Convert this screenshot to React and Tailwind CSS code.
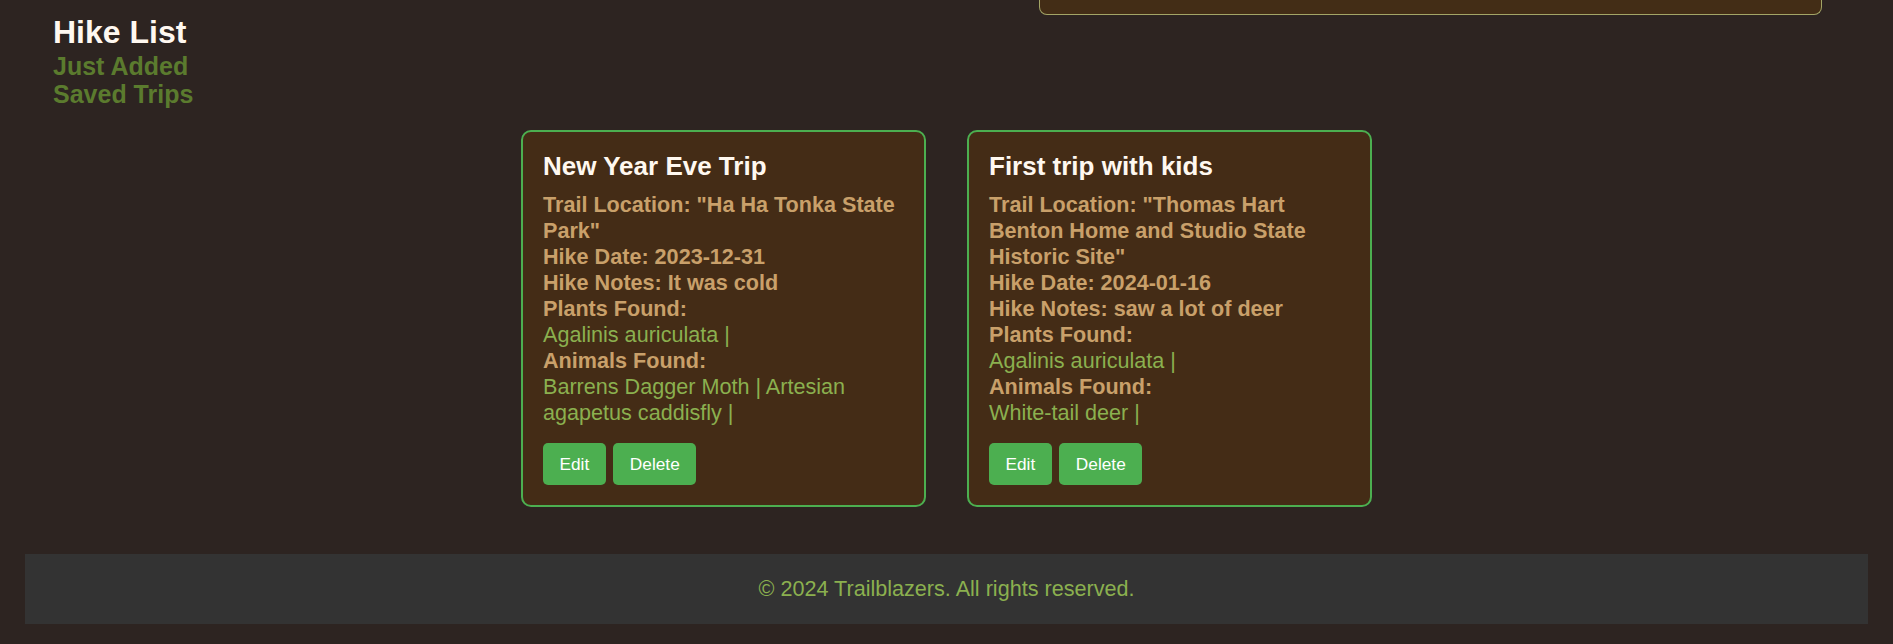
import React from 'react';

const hikes = [
  {
    id: 1,
    name: 'New Year Eve Trip',
    location: '"Ha Ha Tonka State Park"',
    date: '2023-12-31',
    notes: 'It was cold',
    plants: ['Agalinis auriculata'],
    animals: ['Barrens Dagger Moth', 'Artesian agapetus caddisfly'],
  },
  {
    id: 2,
    name: 'First trip with kids',
    location: '"Thomas Hart Benton Home and Studio State Historic Site"',
    date: '2024-01-16',
    notes: 'saw a lot of deer',
    plants: ['Agalinis auriculata'],
    animals: ['White-tail deer'],
  },
];

const HikeCard = ({ hike }) => (
  <div className="w-[405px] bg-[#442c16] border-2 border-[#4caf50] rounded-[10px] p-[20px]">
    <h3 className="text-[26px] font-bold leading-[30px] text-[#fff8f0] -mt-[1px] mb-[11px]">{hike.name}</h3>
    <div className="text-[21.6px] leading-[26px]">
      <p className="font-bold text-[#c9a06a]">Trail Location: {hike.location}</p>
      <p className="font-bold text-[#c9a06a]">Hike Date: {hike.date}</p>
      <p className="font-bold text-[#c9a06a]">Hike Notes: {hike.notes}</p>
      <p className="font-bold text-[#c9a06a]">Plants Found:</p>
      <p className="text-[#8bb04f]">
        {hike.plants.map((p) => `${p} | `).join('')}
      </p>
      <p className="font-bold text-[#c9a06a]">Animals Found:</p>
      <p className="text-[#8bb04f]">
        {hike.animals.map((a) => `${a} | `).join('')}
      </p>
    </div>
    <div className="flex gap-[7.6px] mt-[17px]">
      <button className="bg-[#4caf50] text-white text-[17.28px] leading-[20px] px-[16.5px] py-[11px] rounded-[5px]">
        Edit
      </button>
      <button className="bg-[#4caf50] text-white text-[17.28px] leading-[20px] px-[16.5px] py-[11px] rounded-[5px]">
        Delete
      </button>
    </div>
  </div>
);

const App = () => {
  return (
    <div className="min-h-screen bg-[#2d2421] [font-family:'Liberation_Sans',Arial,sans-serif] flex flex-col">
      {/* Header: nav on the left, add-hike form (scrolled off) on the right */}
      <div className="flex justify-between items-start">
        <nav className="pl-[53px] pt-[12px]">
          <h2 className="text-[32px] font-bold leading-[40px] text-[#fff8f0]">Hike List</h2>
          <a className="block text-[25px] font-bold leading-[28px] text-[#5b7b2e]">Just Added</a>
          <a className="block text-[25px] font-bold leading-[28px] text-[#5b7b2e]">Saved Trips</a>
        </nav>
        <div className="w-[783px] h-[15px] mr-[71px] bg-[#432d16] border border-t-0 border-[#a3a566] rounded-b-[8px]" />
      </div>

      {/* Hike cards */}
      <main className="flex justify-center gap-[41px] mt-[22px]">
        {hikes.map((hike) => (
          <HikeCard key={hike.id} hike={hike} />
        ))}
      </main>

      <footer className="mx-[25px] mt-[47px] mb-[20px] h-[70px] bg-[#333333] flex items-center justify-center">
        <p className="text-[21.6px] text-[#8bb04f]">© 2024 Trailblazers. All rights reserved.</p>
      </footer>
    </div>
  );
};

export default App;
